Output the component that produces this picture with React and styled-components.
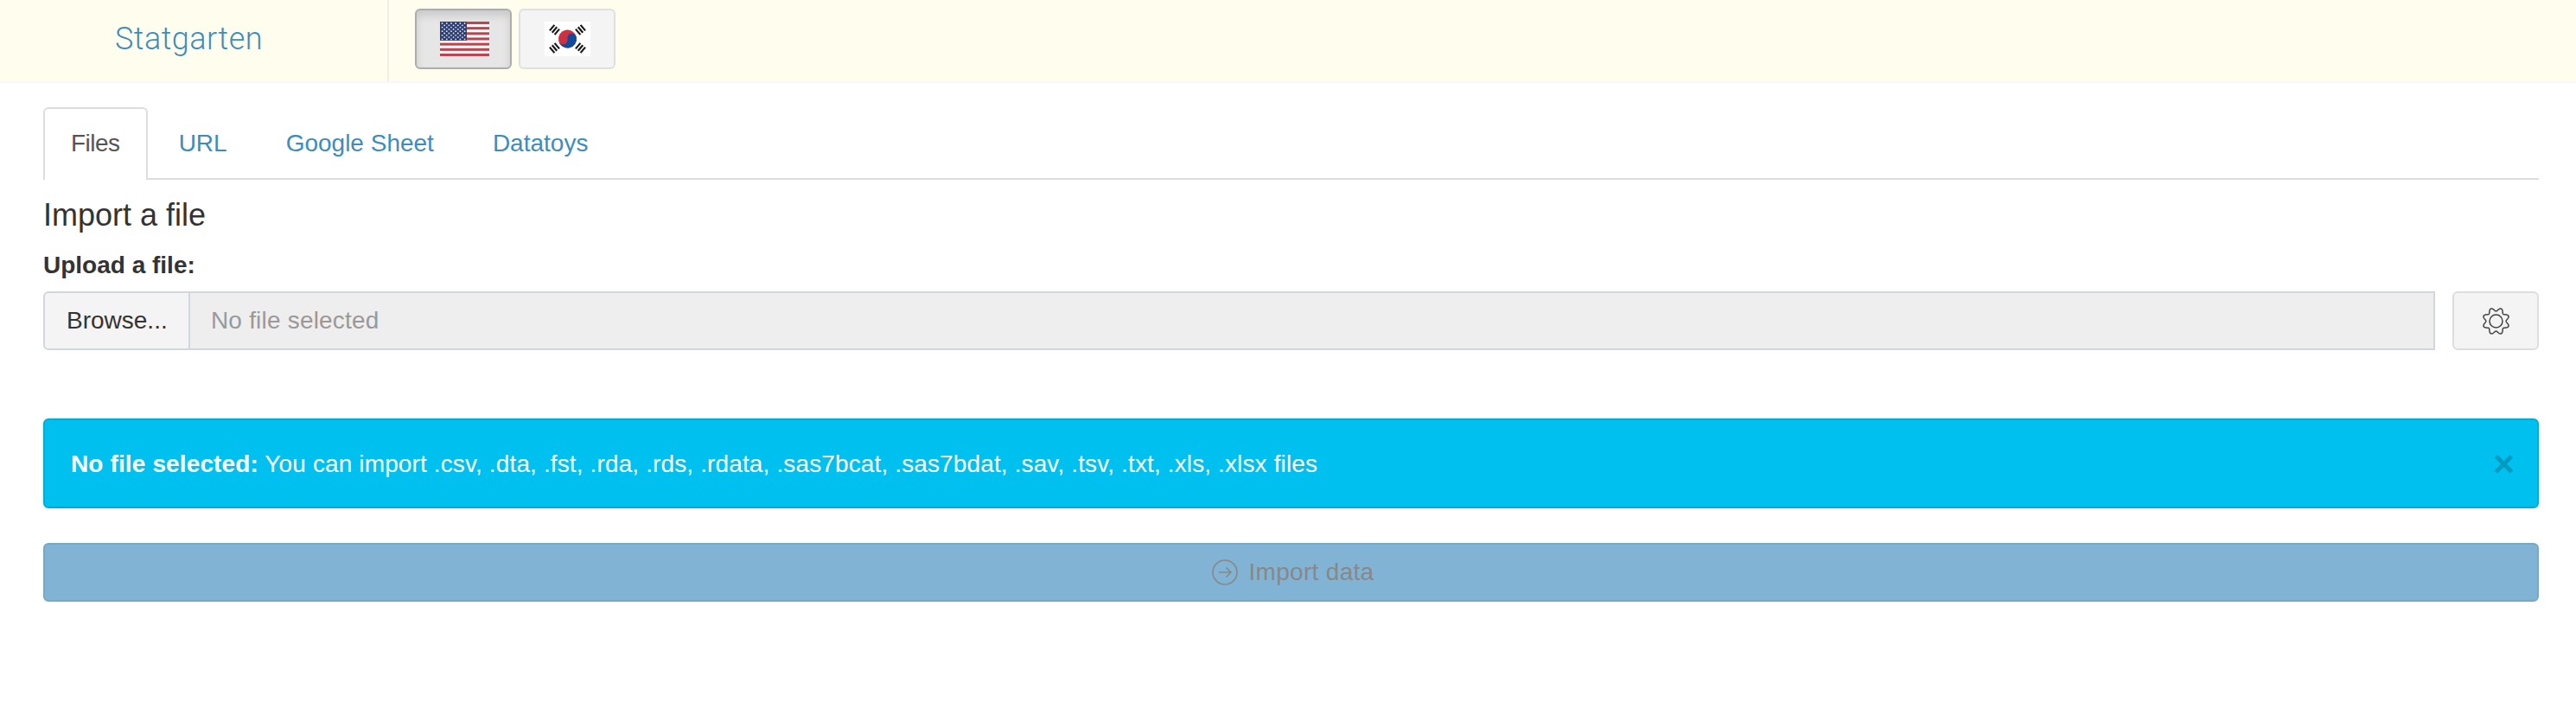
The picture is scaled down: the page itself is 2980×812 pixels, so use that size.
import React from "react";
import styled, { createGlobalStyle } from "styled-components";

const GlobalStyle = createGlobalStyle`
    html, body {
        margin: 0;
        padding: 0;
        background: #ffffff;
        font-family: "Liberation Sans", Arial, sans-serif;
        font-size: 28px;
        line-height: 40px;
        color: #333333;
    }
    * {
        box-sizing: border-box;
    }
`;

// navbar
const Navbar = styled.header`
    display: flex;
    height: 96px;
    background: #fffeee;
    border-bottom: 2px solid #f7f7f7;
`;

const Brand = styled.div`
    width: 450px;
    height: 94px;
    padding-left: 133px;
    border-right: 2px solid #f0efe2;
    font-family: "Roboto", "Liberation Sans", sans-serif;
    font-size: 36px;
    font-weight: 300;
    letter-spacing: 0.5px;
    line-height: 90px;
    color: #3c8dbc;
`;

const LangGroup = styled.div`
    display: flex;
    gap: 8px;
    padding: 10px 0 0 30px;
`;

const LangButton = styled.button`
    display: flex;
    align-items: center;
    justify-content: center;
    width: 112px;
    height: 70px;
    padding: ${(props) => (props.$active ? "0 0 0 3px" : "0")};
    border-radius: 6px;
    border: 2px solid ${(props) => (props.$active ? "#adadad" : "#e0e0e0")};
    background: ${(props) => (props.$active ? "#e6e6e6" : "#f4f4f4")};
    box-shadow: ${(props) =>
        props.$active ? "inset 0 6px 10px rgba(0, 0, 0, 0.125)" : "none"};
`;

// page body
const Main = styled.main`
    padding: 28px 43px 0 50px;
`;

const TabList = styled.nav`
    display: flex;
    height: 84px;
    border-bottom: 2px solid #dddddd;
`;

const Tab = styled.a`
    display: block;
    height: 84px;
    padding: 20px 30px 0;
    margin-right: 4px;
    color: ${(props) => (props.$active ? "#555555" : "#3c8dbc")};
    letter-spacing: ${(props) => (props.$active ? "-0.5px" : "0")};
    background: ${(props) => (props.$active ? "#ffffff" : "transparent")};
    border: 2px solid ${(props) => (props.$active ? "#dddddd" : "transparent")};
    border-bottom: 0;
    border-radius: 6px 6px 0 0;
`;

const Title = styled.h3`
    margin: 0;
    padding-top: 21px;
    font-size: 36px;
    font-weight: 400;
    line-height: 40px;
    color: #333333;
`;

const UploadLabel = styled.label`
    display: block;
    margin-top: 18px;
    font-weight: 700;
    line-height: 40px;
`;

const UploadRow = styled.div`
    display: flex;
    height: 68px;
    margin-top: 10px;
`;

const BrowseButton = styled.span`
    width: 170px;
    padding-top: 12px;
    padding-left: 25px;
    background: #f4f4f4;
    border: 2px solid #d2d6de;
    border-radius: 6px 0 0 6px;
    color: #333333;
`;

const FileName = styled.div`
    width: 2598px;
    padding: 12px 0 0 24px;
    background: #eeeeee;
    border: 2px solid #d2d6de;
    border-left: 0;
    color: #999999;
    letter-spacing: 0.2px;
`;

const GearButton = styled.span`
    display: flex;
    align-items: center;
    justify-content: center;
    width: 100px;
    margin-left: 20px;
    background: #f4f4f4;
    border: 2px solid #dddddd;
    border-radius: 6px;
`;

const Alert = styled.div`
    display: flex;
    align-items: center;
    justify-content: space-between;
    height: 104px;
    margin-top: 79px;
    padding: 2px 26px 0 30px;
    background: #00c0ef;
    border: 2px solid #00acd6;
    border-radius: 6px;
    color: #ffffff;
    letter-spacing: 0.13px;
`;

const CloseMark = styled.span`
    font-size: 42px;
    font-weight: 700;
    line-height: 40px;
    color: #000000;
    opacity: 0.2;
`;

const ImportButton = styled.div`
    display: flex;
    align-items: center;
    justify-content: center;
    gap: 13px;
    height: 68px;
    margin-top: 40px;
    padding-left: 4px;
    background: #81b4d4;
    border: 2px solid #79a8c6;
    border-radius: 6px;
    color: #888888;
    letter-spacing: 0.3px;
`;

// drawings
const UsFlag = () => {
    const stripes = [0, 1, 2, 3, 4, 5, 6];
    const stars = [];
    for (let r = 0; r < 9; r++) {
        for (let c = 0; c < (r % 2 ? 5 : 6); c++) {
            stars.push(
                <circle
                    key={`${r}-${c}`}
                    cx={2.6 + c * 5.2 + (r % 2 ? 2.6 : 0)}
                    cy={2 + r * 2.3}
                    r="0.9"
                    fill="#e4e7f0"
                />
            );
        }
    }
    return (
        <svg width="57" height="40" viewBox="0 0 57 40">
            <rect width="57" height="40" fill="#ffffff" />
            {stripes.map((i) => (
                <rect
                    key={i}
                    y={i * 6.15}
                    width="57"
                    height="3.08"
                    fill="#c0424e"
                />
            ))}
            <rect width="31" height="22" fill="#2f3f72" />
            {stars}
        </svg>
    );
};

const KrBars = ({ x, y, rotate }) => (
    <g transform={`translate(${x} ${y}) rotate(${rotate})`} fill="#1a1a1a">
        <rect x="-4.25" y="-4.8" width="8.5" height="2.2" />
        <rect x="-4.25" y="-1.1" width="8.5" height="2.2" />
        <rect x="-4.25" y="2.6" width="8.5" height="2.2" />
    </g>
);

const KrFlag = () => (
    <svg width="53" height="40" viewBox="0 0 53 40">
        <rect width="53" height="40" fill="#ffffff" />
        <KrBars x="11.5" y="9.5" rotate="-50" />
        <KrBars x="41.5" y="9.5" rotate="50" />
        <KrBars x="11.5" y="30.5" rotate="50" />
        <KrBars x="41.5" y="30.5" rotate="-50" />
        <g transform="rotate(-12 26.5 20)">
            <circle cx="26.5" cy="20" r="10.5" fill="#cf3040" />
            <path
                d="M16 20 a5.25 5.25 0 0 0 10.5 0 a5.25 5.25 0 0 1 10.5 0 a10.5 10.5 0 0 1 -21 0z"
                fill="#0f4a9c"
            />
        </g>
    </svg>
);

const gearPath = () => {
    const points = [];
    for (let i = 0; i < 240; i++) {
        const a = (i / 240) * Math.PI * 2;
        const r = 13.6 + 2 * Math.cos(8 * a + Math.PI);
        points.push(
            `${(16.5 + r * Math.sin(a)).toFixed(2)} ${(16.5 - r * Math.cos(a)).toFixed(2)}`
        );
    }
    return `M${points.join("L")}Z`;
};

const GearIcon = () => (
    <svg width="33" height="33" viewBox="0 0 33 33" fill="none" stroke="#444444" strokeWidth="1.5">
        <path d={gearPath()} />
        <circle cx="16.5" cy="16.5" r="7.5" />
    </svg>
);

const ArrowCircleIcon = () => (
    <svg width="30" height="30" viewBox="0 0 30 30" fill="none" stroke="#888888" strokeWidth="1.6">
        <circle cx="15" cy="15" r="14" />
        <path d="M8 15h14M16.5 9.5 22 15l-5.5 5.5" />
    </svg>
);

const App = () => {
    return (
        <>
            <GlobalStyle />
            <Navbar>
                <Brand>Statgarten</Brand>
                <LangGroup>
                    <LangButton $active>
                        <UsFlag />
                    </LangButton>
                    <LangButton>
                        <KrFlag />
                    </LangButton>
                </LangGroup>
            </Navbar>
            <Main>
                <TabList>
                    <Tab $active>Files</Tab>
                    <Tab>URL</Tab>
                    <Tab>Google Sheet</Tab>
                    <Tab>Datatoys</Tab>
                </TabList>
                <Title>Import a file</Title>
                <UploadLabel>Upload a file:</UploadLabel>
                <UploadRow>
                    <BrowseButton>Browse...</BrowseButton>
                    <FileName>No file selected</FileName>
                    <GearButton>
                        <GearIcon />
                    </GearButton>
                </UploadRow>
                <Alert>
                    <span>
                        <b>No file selected:</b> You can import .csv, .dta,
                        .fst, .rda, .rds, .rdata, .sas7bcat, .sas7bdat, .sav,
                        .tsv, .txt, .xls, .xlsx files
                    </span>
                    <CloseMark>×</CloseMark>
                </Alert>
                <ImportButton>
                    <ArrowCircleIcon />
                    Import data
                </ImportButton>
            </Main>
        </>
    );
};

export default App;
